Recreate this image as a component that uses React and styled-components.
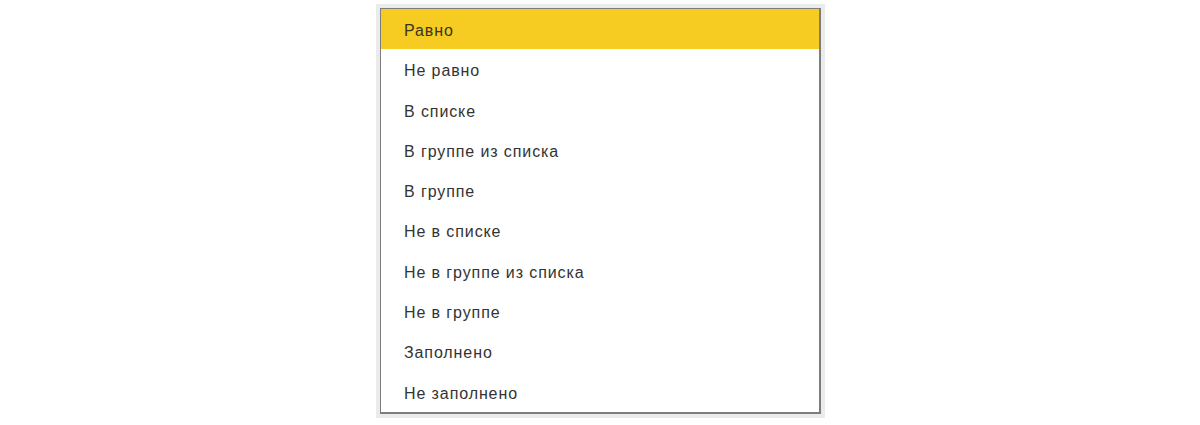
import React from "react";
import styled, { createGlobalStyle } from "styled-components";

const Global = createGlobalStyle`
  html, body { margin: 0; padding: 0; background: #ffffff; }
  body { font-family: "Liberation Sans", Arial, sans-serif; }
`;

const Page = styled.div`
  width: 1200px;
  height: 425px;
  display: flex;
  justify-content: center;
  padding-top: 4px;
  box-sizing: border-box;
`;

const Frame = styled.div`
  margin-left: 1px;
  width: 449px;
  height: 414px;
  box-sizing: border-box;
  background: #ebebeb;
  padding: 4px;
`;

const List = styled.ul`
  list-style: none;
  margin: 0;
  padding: 0;
  height: 100%;
  box-sizing: border-box;
  border: 1px solid #7d7d7d;
  border-right-width: 2px;
  border-bottom-width: 2px;
  background: #ffffff;
`;

const Item = styled.li`
  height: 40.3px;
  box-sizing: border-box;
  padding: 4px 0 0 23px;
  line-height: 36px;
  font-size: 16px;
  letter-spacing: 0.9px;
  color: ${(p) => (p.$active ? "#3a3320" : "#333333")};
  background: ${(p) => (p.$active ? "#f6cb22" : "transparent")};
`;

const items = [
  "Равно",
  "Не равно",
  "В списке",
  "В группе из списка",
  "В группе",
  "Не в списке",
  "Не в группе из списка",
  "Не в группе",
  "Заполнено",
  "Не заполнено",
];

export default function App() {
  return (
    <>
      <Global />
      <Page>
        <Frame>
          <List>
            {items.map((t, i) => (
              <Item key={t} $active={i === 0}>
                {t}
              </Item>
            ))}
          </List>
        </Frame>
      </Page>
    </>
  );
}
